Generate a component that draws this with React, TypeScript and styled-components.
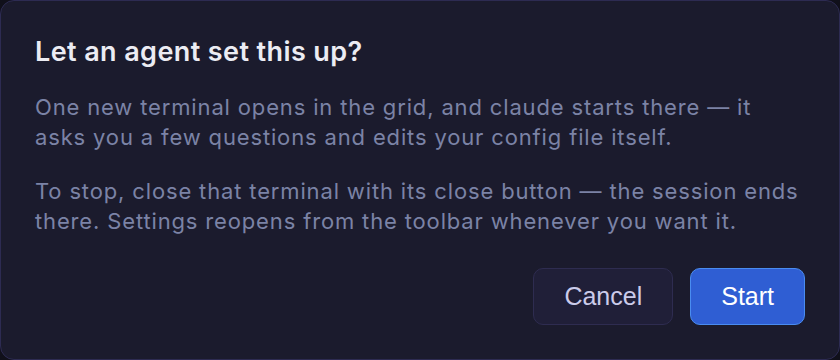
import React from "react";
import styled, { createGlobalStyle } from "styled-components";

const Global = createGlobalStyle`
  html, body {
    margin: 0;
    padding: 0;
    background: #10101a;
  }
  * { box-sizing: border-box; }
`;

const Dialog = styled.div`
  width: 840px;
  height: 360px;
  background: #1b1b2d;
  border: 1px solid #2d2b52;
  border-radius: 14px;
  padding: 34px;
  display: flex;
  flex-direction: column;
  font-family: Inter, "Noto Sans", sans-serif;
`;

const Title = styled.h2`
  margin: 0;
  font-size: 27px;
  line-height: 34px;
  font-weight: 600;
  color: #ececf3;
  letter-spacing: 0.4px;
`;

const Body = styled.div`
  margin-top: 24px;
  display: flex;
  flex-direction: column;
  gap: 25px;
`;

const Paragraph = styled.p`
  margin: 0;
  font-size: 22px;
  line-height: 29.5px;
  color: #7b83a6;
  letter-spacing: 0.85px;
  white-space: nowrap;
`;

const Actions = styled.div`
  margin-top: auto;
  display: flex;
  justify-content: flex-end;
  gap: 17px;
`;

const Button = styled.button<{ $primary?: boolean }>`
  height: 57px;
  padding: 0 30px;
  border-radius: 10px;
  font-family: "Liberation Sans", Arial, sans-serif;
  font-size: 25px;
  cursor: pointer;
  border: 1.5px solid ${(p) => (p.$primary ? "#4a8cf0" : "#2e2c50")};
  background: ${(p) => (p.$primary ? "#2f5ed3" : "#201f38")};
  color: ${(p) => (p.$primary ? "#ffffff" : "#cbcbea")};
`;

export default function App() {
  return (
    <>
      <Global />
      <Dialog>
        <Title>Let an agent set this up?</Title>
        <Body>
          <Paragraph>
            One new terminal opens in the grid, and claude starts there — it
            <br />
            asks you a few questions and edits your config file itself.
          </Paragraph>
          <Paragraph>
            To stop, close that terminal with its close button — the session ends
            <br />
            there. Settings reopens from the toolbar whenever you want it.
          </Paragraph>
        </Body>
        <Actions>
          <Button>Cancel</Button>
          <Button $primary>Start</Button>
        </Actions>
      </Dialog>
    </>
  );
}
